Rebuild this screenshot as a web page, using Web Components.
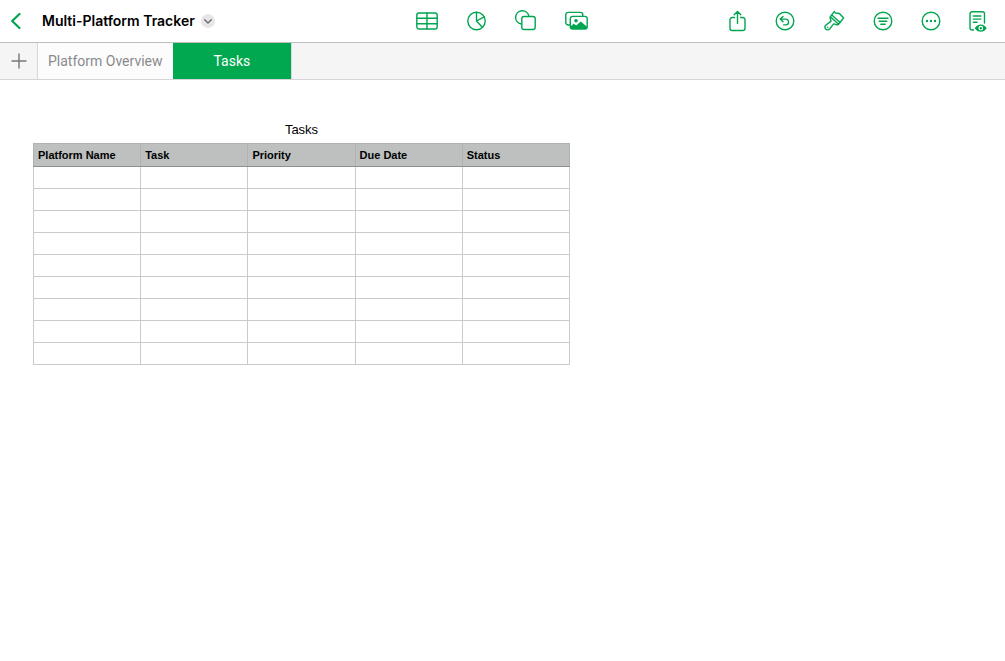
<!DOCTYPE html>
<html lang="en">
<head>
<meta charset="utf-8">
<meta name="viewport" content="width=device-width, initial-scale=1">
<title>Multi-Platform Tracker</title>
<style>
  body { margin: 0; background: #fff; font-family: Inter, "Liberation Sans", sans-serif; color: #000; }
</style>
</head>
<body>
<tracker-app></tracker-app>

<script>
const ICONS = {
  back: [11, 18, '<path d="M9.500 2 2.200 9l7.300 7" stroke-width="2.200"/>'],
  chevron: [14, 14, '<circle cx="7" cy="7" r="7" fill="#e6e6e8" stroke="none"/><path d="m3.700 5.800 3.300 3.300 3.300-3.300" stroke="#6f6f74" stroke-width="1.400"/>'],
  plus: [16, 16, '<path d="M8 1v14M1 8h14" stroke-width="1.400"/>'],
  table: [22, 22, '<rect x=".8" y="3" width="20.400" height="16" rx="2.200"/><path d="M1 8.300h20M1 13.700h20M11 3v16"/>'],
  chart: [19, 22, '<circle cx="9.500" cy="11" r="8.700"/><path d="M9.500 2.300V11l5.800 6.300M9.500 11l7.600-4.200"/>'],
  shape: [21, 22, '<path d="M6.200 14A6.700 6.700 0 1 1 13.900 6"/><rect x="6.800" y="6.500" width="13.400" height="13" rx="2.200"/>'],
  media: [23, 22, '<path d="M4.500 15H3.200A2.400 2.400 0 0 1 .8 12.600V4.800a2.400 2.400 0 0 1 2.400-2.400h12.200a2.400 2.400 0 0 1 2.400 2.400v1"/><rect x="5.300" y="6.400" width="16.900" height="12.600" rx="2.300"/><circle cx="11" cy="10.700" r="1.800" fill="currentColor" stroke="none"/><path d="m5.500 16.500 3.200-2.800 2.500 1.900 4.600-4.100 6.200 5.200v.8a1.500 1.500 0 0 1-1.500 1.500H7a1.500 1.500 0 0 1-1.500-1.500z" fill="currentColor" stroke="none"/>'],
  share: [18, 22, '<path d="M5.500 7.500H3.200A2.200 2.200 0 0 0 1 9.700v8.600a2.200 2.200 0 0 0 2.200 2.200h10.600a2.200 2.200 0 0 0 2.200-2.200V9.700a2.200 2.200 0 0 0-2.200-2.200h-2.300M8.500 13.500V1.500M5.200 4.700l3.300-3.300 3.300 3.300"/>'],
  undo: [20, 22, '<circle cx="10" cy="11" r="8.800"/><path d="m8 6.500-2.800 2.600L8 11.800M5.500 9.100h5.200a2.900 2.900 0 0 1 0 5.800H8.700"/>'],
  brush: [22, 22, '<path d="M11.200 1.600C11.900 3 12.800 3.600 14.300 3.300 15.500 3 16.300 3.300 17.200 4.200L20.600 8 15.500 14.300 7.400 6.700z"/><path d="M7.400 6.700c-.9 1.400-.3 2.300.3 3.200.6.900.3 1.500-.5 2l-4.500 3.300a2.700 2.700 0 1 0 3.900 3.900l3.400-4.500c.5-.8 1.200-1 2-.4 1 .6 2.200 1 3.500.1M8.800 5.100l8.200 7.500"/><circle cx="4.700" cy="17.200" r=".8" fill="currentColor" stroke="none"/>'],
  organize: [20, 22, '<circle cx="10" cy="11" r="8.800"/><path d="M5 8.200h10M6.200 11.300h7.600M7.800 14.300h4.400"/>'],
  more: [20, 22, '<circle cx="10" cy="11" r="8.800"/><g fill="currentColor" stroke="none"><circle cx="6" cy="11" r="1.200"/><circle cx="10" cy="11" r="1.200"/><circle cx="14" cy="11" r="1.200"/></g>'],
  view: [18, 22, '<path d="M4.500 20H3A2 2 0 0 1 1 18V3.800a2 2 0 0 1 2-2h10.500a2 2 0 0 1 2 2V13M4.300 6h7.600M4.300 9.100h7.600M4.300 12.300h3.800"/><path d="M5.800 18.200c2.800-4.800 9-4.800 11.900 0-2.900 4.800-9.100 4.800-11.900 0z" fill="currentColor" stroke="none"/><circle cx="11.800" cy="18.200" r="1.800" fill="currentColor" stroke="#fff" stroke-width="1.200"/>']
};

class UiIcon extends HTMLElement {
  connectedCallback() {
    const [w, h, art] = ICONS[this.getAttribute('name')];
    this.attachShadow({ mode: 'open' }).innerHTML = `
      <style>
        :host { display: block; }
        svg { display: block; fill: none; stroke: currentColor; stroke-width: 1.4; stroke-linecap: round; stroke-linejoin: round; }
      </style>
      <svg width="${w}" height="${h}" viewBox="0 0 ${w} ${h}" aria-hidden="true">${art}</svg>`;
  }
}
customElements.define('ui-icon', UiIcon);

class IconButton extends HTMLElement {
  connectedCallback() {
    this.attachShadow({ mode: 'open' }).innerHTML = `
      <style>
        :host { display: block; color: #00a550; }
        button { display: grid; place-items: center; margin: 0; padding: 0; border: 0; background: none; color: inherit; cursor: pointer; }
      </style>
      <button type="button" aria-label="${this.getAttribute('label')}"><ui-icon name="${this.getAttribute('icon')}"></ui-icon></button>`;
  }
}
customElements.define('icon-button', IconButton);

class AppToolbar extends HTMLElement {
  connectedCallback() {
    this.attachShadow({ mode: 'open' }).innerHTML = `
      <style>
        :host { display: grid; grid-template-columns: 1fr auto 1fr; align-items: center; height: 42px; padding: 0 18px 0 10px; border-bottom: 1px solid #bdbdc0; }
        .title { display: flex; align-items: center; gap: 6px; }
        h1 { margin: 0 0 0 15px; font-size: 14px; line-height: 20px; font-weight: 600; white-space: nowrap; }
        .insert { display: flex; gap: 29px; padding-left: 7px; }
        .actions { display: flex; justify-content: flex-end; gap: 28px; }
      </style>
      <div class="title">
        <icon-button icon="back" label="Back"></icon-button>
        <h1><slot></slot></h1>
        <icon-button icon="chevron" label="Document options"></icon-button>
      </div>
      <div class="insert">
        <icon-button icon="table" label="Insert table"></icon-button>
        <icon-button icon="chart" label="Insert chart"></icon-button>
        <icon-button icon="shape" label="Insert shape"></icon-button>
        <icon-button icon="media" label="Insert media"></icon-button>
      </div>
      <div class="actions">
        <icon-button icon="share" label="Share"></icon-button>
        <icon-button icon="undo" label="Undo"></icon-button>
        <icon-button icon="brush" label="Format"></icon-button>
        <icon-button icon="organize" label="Organize"></icon-button>
        <icon-button icon="more" label="More"></icon-button>
        <icon-button icon="view" label="Reading view"></icon-button>
      </div>`;
  }
}
customElements.define('app-toolbar', AppToolbar);

class SheetTab extends HTMLElement {
  connectedCallback() {
    this.attachShadow({ mode: 'open' }).innerHTML = `
      <style>
        :host { display: flex; }
        button { margin: 0; padding: 0 10px; border: 0; background: #fcfcfc; color: #8a8a8e; font: 14px/20px Roboto, "Liberation Sans", sans-serif; white-space: nowrap; cursor: pointer; }
        :host([selected]) button { padding: 0 41px; background: #00a84f; color: #fff; }
      </style>
      <button type="button" role="tab" aria-selected="${this.hasAttribute('selected')}"><slot></slot></button>`;
  }
}
customElements.define('sheet-tab', SheetTab);

class SheetTabs extends HTMLElement {
  connectedCallback() {
    this.attachShadow({ mode: 'open' }).innerHTML = `
      <style>
        :host { display: flex; height: 36px; background: #f5f5f6; border-bottom: 1px solid #d5d5d8; }
        .add { display: grid; place-items: center; width: 37px; border-right: 1px solid #d9d9dc; }
        .add icon-button { color: #77777b; }
        .tabs { display: flex; border-right: 1px solid #d9d9dc; }
      </style>
      <div class="add"><icon-button icon="plus" label="Add sheet"></icon-button></div>
      <div class="tabs" role="tablist"><slot></slot></div>`;
  }
}
customElements.define('sheet-tabs', SheetTabs);

class DataTable extends HTMLElement {
  connectedCallback() {
    const columns = this.getAttribute('columns').split(',');
    const rows = Number(this.getAttribute('rows'));
    const head = columns.map(c => `<th scope="col">${c}</th>`).join('');
    const row = `<tr>${'<td></td>'.repeat(columns.length)}</tr>`;
    this.attachShadow({ mode: 'open' }).innerHTML = `
      <style>
        :host { display: block; width: 537px; max-width: 100%; font-family: "Liberation Sans", Arial, sans-serif; }
        table { width: 100%; table-layout: fixed; border-collapse: collapse; }
        caption { padding-bottom: 3px; font-size: 13px; line-height: 20px; }
        th, td { box-sizing: border-box; height: 22px; padding: 0 4px; border: 1px solid #cacaca; }
        th { height: 23px; background: #bdc0bf; border-color: #b0b3b2; border-bottom-color: #8e9090; font-size: 11px; line-height: 16px; font-weight: 700; text-align: left; white-space: nowrap; }
      </style>
      <table>
        <caption>${this.getAttribute('caption')}</caption>
        <thead><tr>${head}</tr></thead>
        <tbody>${row.repeat(rows)}</tbody>
      </table>`;
  }
}
customElements.define('data-table', DataTable);

class TrackerApp extends HTMLElement {
  connectedCallback() {
    this.attachShadow({ mode: 'open' }).innerHTML = `
      <style>
        :host { display: flex; flex-direction: column; min-height: 100vh; }
        main { flex: 1; padding: 40px 33px; }
      </style>
      <app-toolbar>Multi-Platform Tracker</app-toolbar>
      <sheet-tabs>
        <sheet-tab>Platform Overview</sheet-tab>
        <sheet-tab selected>Tasks</sheet-tab>
      </sheet-tabs>
      <main>
        <data-table caption="Tasks" columns="Platform Name,Task,Priority,Due Date,Status" rows="9"></data-table>
      </main>`;
  }
}
customElements.define('tracker-app', TrackerApp);
</script>
</body>
</html>
